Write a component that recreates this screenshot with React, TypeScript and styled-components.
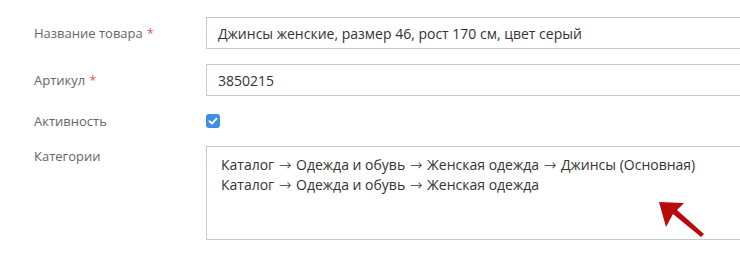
import React from 'react';
import styled, { createGlobalStyle } from 'styled-components';

const GlobalStyle = createGlobalStyle`
  html, body {
    margin: 0;
    padding: 0;
    background: #fff;
    overflow: hidden;
  }
  body {
    font-family: "Open Sans", "Noto Sans", sans-serif;
  }
`;

const Form = styled.div`
  position: relative;
  width: 780px;
  padding-top: 17px;
  display: flex;
  flex-direction: column;
`;

const Row = styled.div<{ gap: number; align?: string }>`
  display: flex;
  align-items: ${({ align }) => align || 'center'};
  margin-bottom: ${({ gap }) => gap}px;
`;

const Label = styled.div<{ top?: number }>`
  width: 206px;
  padding-left: 34px;
  box-sizing: border-box;
  padding-top: ${({ top }) => top || 0}px;
  font-size: 13px;
  color: #666;
  line-height: 18px;
  flex-shrink: 0;
`;

const Required = styled.span`
  color: #e05a5a;
  margin-left: 4px;
`;

const Input = styled.div`
  width: 580px;
  height: 32px;
  box-sizing: border-box;
  border: 1px solid #c8c8c8;
  padding: 0 11px;
  display: flex;
  align-items: center;
  font-size: 14px;
  color: #333;
`;

const TextArea = styled.div`
  width: 580px;
  height: 94px;
  box-sizing: border-box;
  border: 1px solid #c8c8c8;
  padding: 8px 14px;
  font-size: 14px;
  line-height: 19px;
  color: #333;
`;

const Sep = styled.span`
  font-family: "DejaVu Sans", sans-serif;
  font-weight: 200;
  font-size: 15px;
  margin: 0 1px;
`;

const Check = styled.span`
  width: 14px;
  height: 14px;
  border-radius: 3px;
  background: #3f8fe8;
  display: flex;
  align-items: center;
  justify-content: center;
`;

const Arrow = styled.svg`
  position: absolute;
  left: 655px;
  top: 198px;
`;

const Path = ({ items }: { items: string[] }) => (
  <div>
    {items.map((s, i) => (
      <React.Fragment key={i}>
        {i > 0 && <> <Sep>→</Sep> </>}
        {s}
      </React.Fragment>
    ))}
  </div>
);

export default function App() {
  return (
    <>
      <GlobalStyle />
      <Form>
        <Row gap={15}>
          <Label>
            Название товара<Required>*</Required>
          </Label>
          <Input>Джинсы женские, размер 46, рост 170 см, цвет серый</Input>
        </Row>
        <Row gap={16}>
          <Label>
            Артикул<Required>*</Required>
          </Label>
          <Input>3850215</Input>
        </Row>
        <Row gap={16}>
          <Label>Активность</Label>
          <Check>
            <svg width="10" height="10" viewBox="0 0 10 10">
              <path d="M1.5 5.2 L4 7.5 L8.5 2.6" fill="none" stroke="#fff" strokeWidth="1.9" strokeLinecap="round" strokeLinejoin="round" />
            </svg>
          </Check>
        </Row>
        <Row gap={0} align="flex-start">
          <Label top={1}>Категории</Label>
          <TextArea>
            <Path items={['Каталог', 'Одежда и обувь', 'Женская одежда', 'Джинсы (Основная)']} />
            <Path items={['Каталог', 'Одежда и обувь', 'Женская одежда']} />
          </TextArea>
        </Row>
        <Arrow width="52" height="42" viewBox="655 198 52 42">
          <polygon points="659,202 684,203 677,210 704,234 701,237 673,214 666,227" fill="#b80c0c" />
        </Arrow>
      </Form>
    </>
  );
}
